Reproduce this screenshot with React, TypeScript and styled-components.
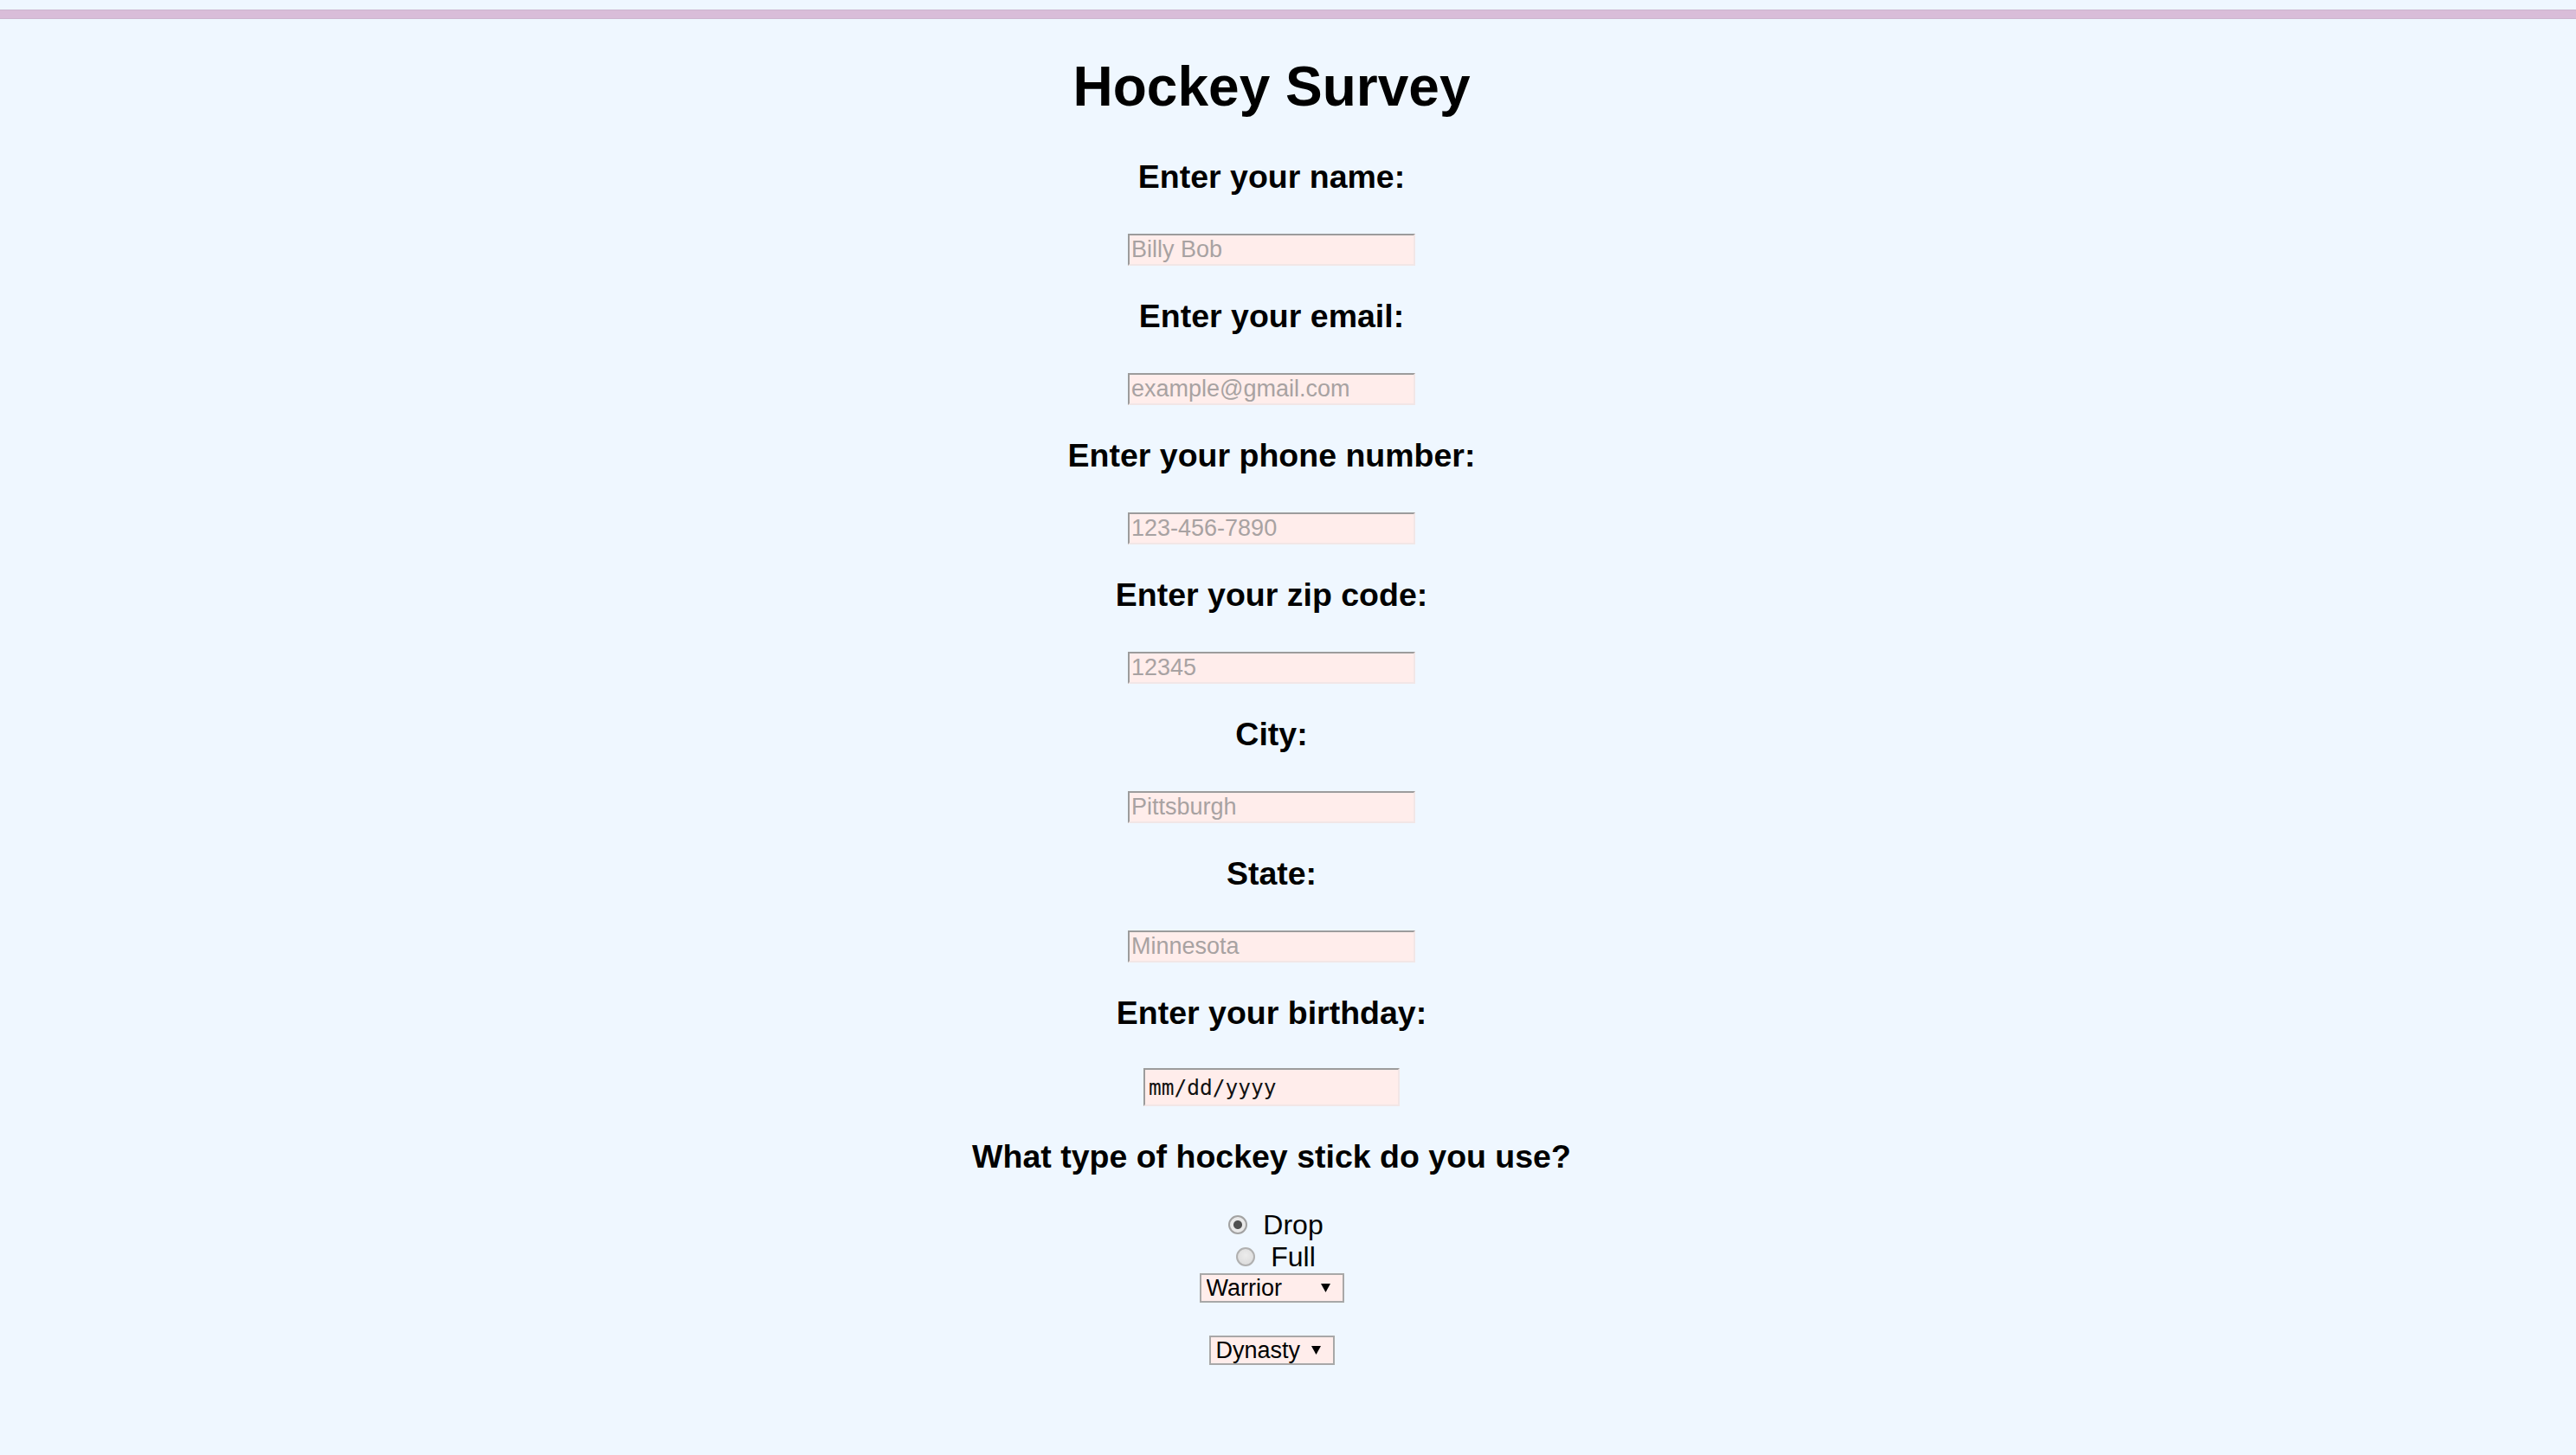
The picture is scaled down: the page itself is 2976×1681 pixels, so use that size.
import React from "react";
import styled, { createGlobalStyle } from "styled-components";

const GlobalStyle = createGlobalStyle`
  html, body {
    margin: 0;
    padding: 0;
    background: #eff7ff;
  }
  body {
    font-family: "Liberation Sans", Arial, sans-serif;
    color: #000;
    min-height: 100vh;
  }
`;

const Page = styled.div`
  min-height: 1681px;
  background: #eff7ff;
  overflow: hidden;
`;

const TopBar = styled.div`
  margin-top: 11px;
  height: 11px;
  background: #d9bdd9;
  box-shadow: inset 0 1px 0 #cdb6cf, inset 0 -1px 0 #cdb6cf;
`;

const Form = styled.form`
  display: flex;
  flex-direction: column;
  align-items: center;
  padding-right: 38px;
  text-align: center;
`;

const Title = styled.h1`
  margin: 41px 0 46px;
  font-size: 64px;
  line-height: 74px;
  font-weight: 700;
`;

const Label = styled.h3<{ $after?: number }>`
  margin: 0 0 ${(p) => p.$after ?? 44}px;
  font-size: 37.5px;
  line-height: 43px;
  font-weight: 700;
`;

const TextInput = styled.input`
  box-sizing: border-box;
  width: 332px;
  height: 37px;
  margin: 0 0 37px;
  padding: 0 2px;
  background: #ffedeb;
  border-style: solid;
  border-width: 2px;
  border-color: #9c9c9c #f2e6e6 #f2e6e6 #9c9c9c;
  border-radius: 0;
  font-family: "Liberation Sans", Arial, sans-serif;
  font-size: 27px;
  color: #000;
  outline: none;

  &::placeholder {
    color: #a8a2a2;
  }
`;

const DateInput = styled(TextInput)`
  width: 296px;
  height: 44px;
  margin-top: -2px;
  margin-bottom: 37px;
  padding: 0 4px;
  font-family: "DejaVu Sans Mono", "Liberation Mono", monospace;
  font-size: 24.5px;

  &::placeholder {
    color: #111;
  }
`;

const RadioLabel = styled.label`
  display: flex;
  align-items: center;
  gap: 18px;
  height: 36.5px;
  padding-left: 10px;
  font-size: 32px;
  line-height: 36px;
`;

const Radio = styled.input.attrs({ type: "radio" })`
  appearance: none;
  -webkit-appearance: none;
  box-sizing: border-box;
  width: 22px;
  height: 22px;
  margin: 0;
  border-radius: 50%;
  border: 2px solid #b0b0b0;
  background: radial-gradient(circle at 50% 40%, #ececec 0, #d8d8d8 100%);

  &:checked {
    border-color: #a2a2a2;
    background: radial-gradient(circle, #4f4f4f 0 4.5px, #e9e9e9 5.5px);
  }
`;

const SelectRow = styled.div<{ $top?: number }>`
  display: flex;
  align-items: center;
  height: 36.5px;
  margin-top: ${(p) => p.$top ?? 0}px;
`;

const SelectWrap = styled.span`
  position: relative;
  display: inline-block;
  line-height: 0;
`;

const Select = styled.select<{ $w: number }>`
  appearance: none;
  -webkit-appearance: none;
  box-sizing: border-box;
  width: ${(p) => p.$w}px;
  height: 34px;
  margin: 0;
  padding: 0 0 0 6px;
  border: 2px solid #a8a8a8;
  border-radius: 0;
  background: #ffedeb;
  color: #000;
  font-family: "Liberation Sans", Arial, sans-serif;
  font-size: 27px;
  outline: none;
`;

const Arrow = styled.svg`
  position: absolute;
  right: 16px;
  top: 50%;
  transform: translateY(-50%);
  pointer-events: none;
`;

const fields = [
  { label: "Enter your name:", placeholder: "Billy Bob" },
  { label: "Enter your email:", placeholder: "example@gmail.com" },
  { label: "Enter your phone number:", placeholder: "123-456-7890" },
  { label: "Enter your zip code:", placeholder: "12345" },
  { label: "City:", placeholder: "Pittsburgh" },
  { label: "State:", placeholder: "Minnesota" },
];

function Dropdown({ width, options }: { width: number; options: string[] }) {
  return (
    <SelectWrap>
      <Select $w={width} defaultValue={options[0]}>
        {options.map((o) => (
          <option key={o}>{o}</option>
        ))}
      </Select>
      <Arrow width="11" height="10" viewBox="0 0 11 10">
        <polygon points="0,0 11,0 5.5,10" fill="#000" />
      </Arrow>
    </SelectWrap>
  );
}

export default function App() {
  return (
    <Page>
      <GlobalStyle />
      <TopBar />
      <Form onSubmit={(e) => e.preventDefault()}>
        <Title>Hockey Survey</Title>
        {fields.map((f) => (
          <React.Fragment key={f.label}>
            <Label>{f.label}</Label>
            <TextInput type="text" placeholder={f.placeholder} />
          </React.Fragment>
        ))}
        <Label>Enter your birthday:</Label>
        <DateInput type="text" placeholder="mm/dd/yyyy" />
        <Label $after={39}>What type of hockey stick do you use?</Label>
        <RadioLabel>
          <Radio name="stick" defaultChecked />
          Drop
        </RadioLabel>
        <RadioLabel>
          <Radio name="stick" />
          Full
        </RadioLabel>
        <SelectRow>
          <Dropdown width={167} options={["Warrior", "Bauer", "CCM", "Sher-Wood"]} />
        </SelectRow>
        <SelectRow $top={35}>
          <Dropdown width={145} options={["Dynasty", "Alpha", "Covert"]} />
        </SelectRow>
      </Form>
    </Page>
  );
}
